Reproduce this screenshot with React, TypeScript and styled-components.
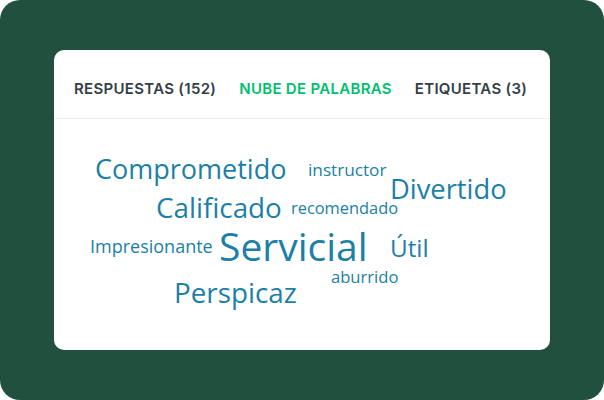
import React from "react";
import styled, { createGlobalStyle } from "styled-components";

const GlobalStyle = createGlobalStyle`
    html, body {
        margin: 0;
        padding: 0;
        background: #ffffff;
    }
`;

const Frame = styled.div`
    width: 604px;
    height: 400px;
    box-sizing: border-box;
    padding: 50px 54px;
    background: #22503f;
    border-radius: 20px;
`;

const Card = styled.div`
    display: flex;
    flex-direction: column;
    height: 100%;
    background: #ffffff;
    border-radius: 10px;
    overflow: hidden;
`;

const TabBar = styled.div`
    display: flex;
    align-items: center;
    gap: 23px;
    height: 69px;
    box-sizing: border-box;
    padding: 8px 20px 0;
    border-bottom: 1px solid #ededed;
`;

const Tab = styled.div<{ $active?: boolean }>`
    font-family: Inter, Roboto, "Liberation Sans", sans-serif;
    font-size: 15px;
    font-weight: 600;
    letter-spacing: 0.3px;
    color: ${(p) => (p.$active ? "#00bf6f" : "#333e48")};
    white-space: nowrap;
`;

const Cloud = styled.div`
    position: relative;
    flex: 1;
`;

const Word = styled.span<{ $size: number; $x: number; $y: number }>`
    position: absolute;
    left: ${(p) => p.$x}px;
    top: ${(p) => p.$y}px;
    font-family: "Open Sans", "Noto Sans", sans-serif;
    font-size: ${(p) => p.$size}px;
    line-height: 1;
    color: #1b7fa7;
    white-space: nowrap;
`;

// positions are page coordinates of the word's top-left corner
const words = [
    { text: "Comprometido", size: 27, x: 95, y: 156 },
    { text: "instructor", size: 17.2, x: 308, y: 162 },
    { text: "Divertido", size: 27.3, x: 390, y: 176 },
    { text: "Calificado", size: 27.8, x: 156, y: 195 },
    { text: "recomendado", size: 16.4, x: 291, y: 201 },
    { text: "Impresionante", size: 18, x: 90, y: 238 },
    { text: "Servicial", size: 39, x: 219, y: 227 },
    { text: "Útil", size: 24.3, x: 390, y: 237 },
    { text: "aburrido", size: 16.6, x: 331, y: 270 },
    { text: "Perspicaz", size: 27.8, x: 174, y: 280 },
];

const CARD_X = 54;
const CLOUD_Y = 120;

export default function App() {
    return (
        <>
            <GlobalStyle />
            <Frame>
                <Card>
                    <TabBar>
                        <Tab>RESPUESTAS (152)</Tab>
                        <Tab $active>NUBE DE PALABRAS</Tab>
                        <Tab>ETIQUETAS (3)</Tab>
                    </TabBar>
                    <Cloud>
                        {words.map((w) => (
                            <Word key={w.text} $size={w.size} $x={w.x - CARD_X} $y={w.y - CLOUD_Y}>
                                {w.text}
                            </Word>
                        ))}
                    </Cloud>
                </Card>
            </Frame>
        </>
    );
}
